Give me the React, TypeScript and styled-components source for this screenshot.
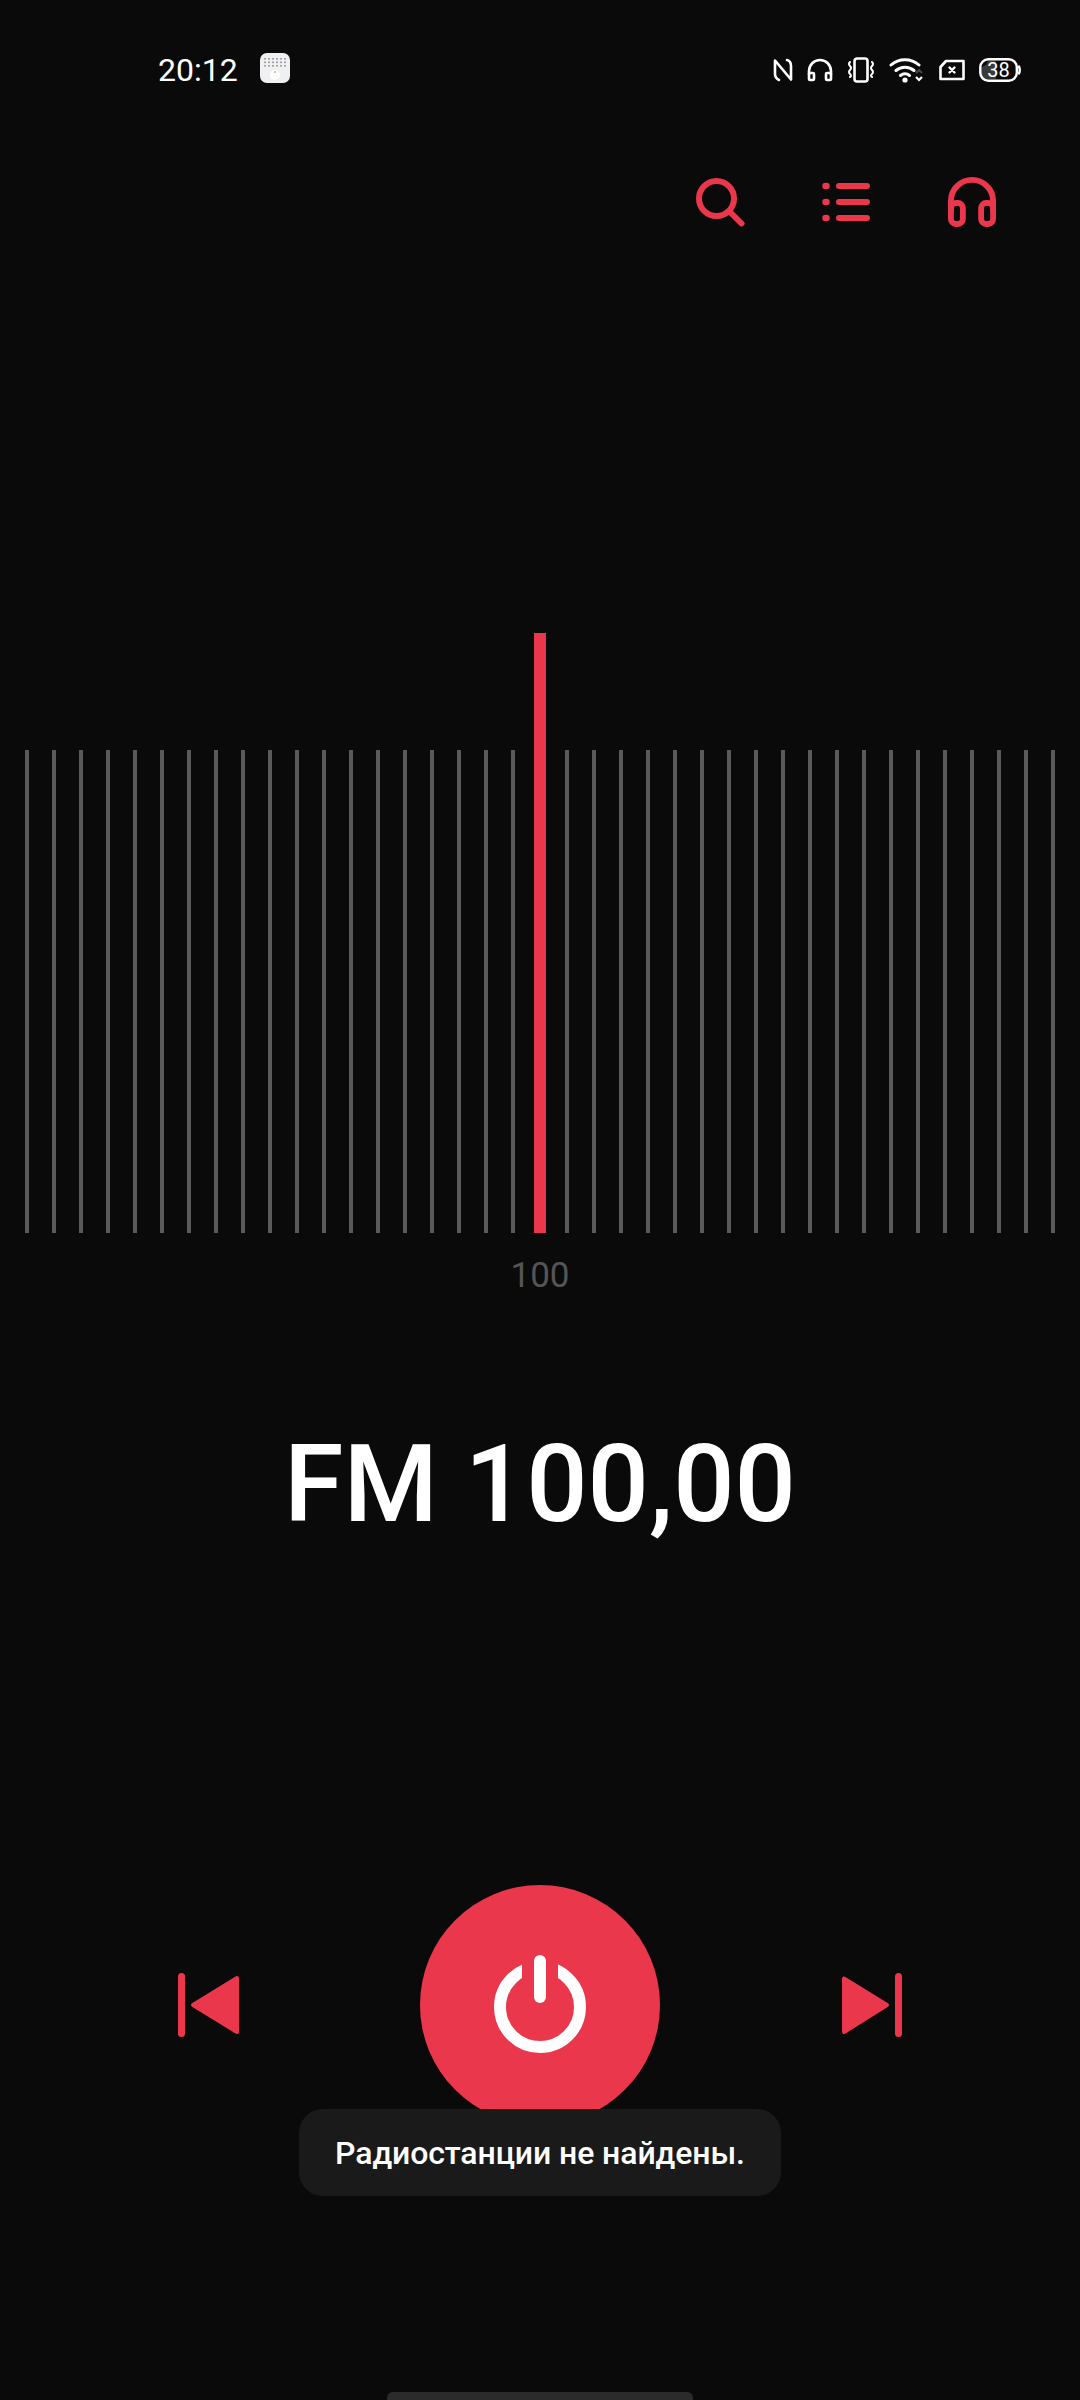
import React from 'react';
import styled, { createGlobalStyle } from 'styled-components';

const RED = '#ea374c';

const GlobalStyle = createGlobalStyle`
  html, body {
    margin: 0;
    padding: 0;
    background: #0a0a0a;
  }
`;

const Screen = styled.div`
  position: relative;
  width: 1080px;
  height: 2400px;
  overflow: hidden;
  display: flex;
  flex-direction: column;
  background: #0a0a0a;
  font-family: Roboto, "Noto Sans", sans-serif;
  color: #fff;
`;

const StatusBar = styled.div`
  height: 140px;
  padding: 0 59px 0 158px;
  box-sizing: border-box;
  display: flex;
  align-items: center;
`;

const Clock = styled.span`
  width: 80px;
  font-size: 32px;
`;

const NotificationTile = styled.svg`
  margin: 0 0 4px 22px;
`;

const StatusIcons = styled.div`
  margin-left: auto;
  display: flex;
  align-items: center;
  gap: 14px;
`;

const BatteryBox = styled.div`
  position: relative;
  width: 42px;
  height: 24px;
`;

const BatteryValue = styled.span`
  position: absolute;
  inset: 0 3px 0 0;
  display: flex;
  align-items: center;
  justify-content: center;
  font-size: 20px;
  color: #fff;
`;

const Toolbar = styled.div`
  height: 124px;
  padding-right: 83px;
  display: flex;
  justify-content: flex-end;
  align-items: center;
  gap: 76px;
`;

const ToolButton = styled.button`
  width: 50px;
  height: 50px;
  padding: 0;
  border: 0;
  background: none;
  display: block;
`;

const Dial = styled.div`
  position: relative;
  height: 600px;
  margin-top: 369px;
  padding: 0 25px;
  display: flex;
  justify-content: space-between;
  align-items: flex-end;
`;

const Tick = styled.i`
  display: block;
  width: 4px;
  height: 483px;
  background: #5a5a5a;
`;

const Needle = styled.div`
  position: absolute;
  top: 0;
  bottom: 0;
  left: 534px;
  width: 12px;
  background: ${RED};
`;

const ScaleLabel = styled.div`
  margin-top: 22px;
  text-align: center;
  font-size: 35px;
  line-height: 41px;
  color: #555;
`;

const Frequency = styled.div`
  margin-top: 125px;
  text-align: center;
  font-size: 108px;
  line-height: 127px;
  font-weight: 500;
`;

const Controls = styled.div`
  margin-top: 337px;
  padding: 0 178px;
  display: flex;
  justify-content: space-between;
  align-items: center;
`;

const SkipButton = styled.button`
  width: 64px;
  height: 66px;
  padding: 0;
  border: 0;
  background: none;
`;

const PowerButton = styled.button`
  width: 240px;
  height: 240px;
  padding: 0;
  border: 0;
  border-radius: 50%;
  background: ${RED};
  display: flex;
  align-items: center;
  justify-content: center;
`;

const Toast = styled.div`
  position: absolute;
  left: 299px;
  top: 2109px;
  width: 482px;
  height: 87px;
  border-radius: 24px;
  background: #1a1a1a;
  display: flex;
  align-items: center;
  justify-content: center;
  font-size: 32px;
  font-weight: 500;
  letter-spacing: -0.1px;
`;

const HomeBar = styled.div`
  margin: auto auto 0;
  width: 306px;
  height: 8px;
  border-radius: 6px 6px 0 0;
  background: #2b2b2b;
`;

const white = { fill: 'none', stroke: '#fff', strokeWidth: 2.6, strokeLinecap: 'round', strokeLinejoin: 'round' } as const;
const red = { fill: 'none', stroke: RED, strokeWidth: 6, strokeLinecap: 'round', strokeLinejoin: 'round' } as const;

function BatteryIcon() {
  return (
    <BatteryBox>
      <svg width="42" height="24" viewBox="0 0 42 24">
        <path d="M9 3h8v18H9a7 7 0 0 1-2-14z" fill="#3a3a3a" />
        <rect x="1.3" y="1.3" width="36.5" height="21.4" rx="8" fill="none" stroke="#fff" strokeWidth="2.4" />
        <path d="M40 8.5q1.5 3.5 0 7" fill="none" stroke="#fff" strokeWidth="2.4" strokeLinecap="round" />
      </svg>
      <BatteryValue>38</BatteryValue>
    </BatteryBox>
  );
}

const App: React.FC = () => (
  <Screen>
    <GlobalStyle />
    <StatusBar>
      <Clock>20:12</Clock>
      <NotificationTile width="30" height="30" viewBox="0 0 30 30">
        <rect width="30" height="30" rx="7" fill="#f0f0f2" />
        {[5, 8.5, 12].map(y =>
          [5, 9, 13, 17, 21, 25].map(x => (
            <rect key={`${x}-${y}`} x={x - 0.8} y={y} width="1.6" height="1.6" fill="#8e8e92" />
          ))
        )}
        <circle cx="15" cy="22" r="5" fill="#fff" />
        <rect x="14" y="18.5" width="2" height="1" fill="#d9763a" />
      </NotificationTile>
      <StatusIcons>
        <svg width="20" height="24" viewBox="0 0 20 24" {...white}>
          <path d="M6 22Q2 20 2 16V2.5L18 21.5V8Q18 3 14 2" />
        </svg>
        <svg width="26" height="24" viewBox="0 0 26 24" {...white}>
          <path d="M2 16V13a11 11 0 0 1 22 0v3" />
          <rect x="2" y="15" width="5" height="7" rx="1" />
          <rect x="19" y="15" width="5" height="7" rx="1" />
        </svg>
        <svg width="28" height="26" viewBox="0 0 28 26" {...white}>
          <rect x="7.5" y="1.5" width="13" height="23" rx="2.5" />
          <path d="M3 5q-2 2 0 4t0 4 0 4 0 3M25 5q2 2 0 4t0 4 0 4 0 3" strokeWidth="2" />
        </svg>
        <svg width="36" height="26" viewBox="0 0 36 26">
          <g {...white} strokeWidth="3">
            <path d="M2 8a21 21 0 0 1 28 0M7 13.5a14 14 0 0 1 18 0M11.5 18.5a7 7 0 0 1 9 0" />
          </g>
          <circle cx="16" cy="23" r="2.6" fill="#fff" />
          <path d="M27 16l3-3 3 3" fill="none" stroke="#444" strokeWidth="2.2" />
          <path d="M27 20l3 3 3-3" fill="none" stroke="#fff" strokeWidth="2.2" />
        </svg>
        <svg width="26" height="22" viewBox="0 0 26 22" {...white}>
          <path d="M7 2h17.5v18H1.5V8z" />
          <path d="M10.5 8.5l5 5M15.5 8.5l-5 5" strokeWidth="2.4" />
        </svg>
        <BatteryIcon />
      </StatusIcons>
    </StatusBar>

    <Toolbar>
      <ToolButton>
        <svg width="50" height="50" viewBox="0 0 50 50" {...red}>
          <circle cx="21.5" cy="21.5" r="17.5" />
          <path d="M36 36l10.5 10.5" />
        </svg>
      </ToolButton>
      <ToolButton>
        <svg width="50" height="50" viewBox="0 0 50 50" {...red}>
          <path d="M18 9h28M18 25h28M18 41h28" />
          <path d="M4.5 9h1M4.5 25h1M4.5 41h1" strokeWidth="6.5" />
        </svg>
      </ToolButton>
      <ToolButton>
        <svg width="50" height="50" viewBox="0 0 50 50" {...red} strokeWidth="5.8">
          <path d="M3.9 34V24a21.1 21.1 0 0 1 42.2 0v10" />
          <rect x="3.9" y="26" width="12" height="21" rx="5" />
          <rect x="34.1" y="26" width="12" height="21" rx="5" />
        </svg>
      </ToolButton>
    </Toolbar>

    <Dial>
      {Array.from({ length: 39 }, (_, i) => <Tick key={i} />)}
      <Needle />
    </Dial>
    <ScaleLabel>100</ScaleLabel>
    <Frequency>FM 100,00</Frequency>

    <Controls>
      <SkipButton>
        <svg width="64" height="66" viewBox="0 0 64 66">
          <rect x="0" y="1" width="7" height="64" rx="3.5" fill={RED} />
          <path d="M15 33L59 6V60Z" fill={RED} stroke={RED} strokeWidth="4" strokeLinejoin="round" />
        </svg>
      </SkipButton>
      <PowerButton>
        <svg width="92" height="100" viewBox="0 0 92 100">
          <clipPath id="power-gap">
            <path clipRule="evenodd" d="M0 0H92V100H0ZM28 0H64V40H28Z" />
          </clipPath>
          <circle cx="46" cy="52" r="40" fill="none" stroke="#fff" strokeWidth="12" clipPath="url(#power-gap)" />
          <rect x="40" y="0" width="12" height="48" rx="6" fill="#fff" />
        </svg>
      </PowerButton>
      <SkipButton>
        <svg width="64" height="66" viewBox="0 0 64 66">
          <rect x="57" y="1" width="7" height="64" rx="3.5" fill={RED} />
          <path d="M49 33L6 6.5V60Z" fill={RED} stroke={RED} strokeWidth="4" strokeLinejoin="round" />
        </svg>
      </SkipButton>
    </Controls>

    <Toast>Радиостанции не найдены.</Toast>
    <HomeBar />
  </Screen>
);

export default App;
